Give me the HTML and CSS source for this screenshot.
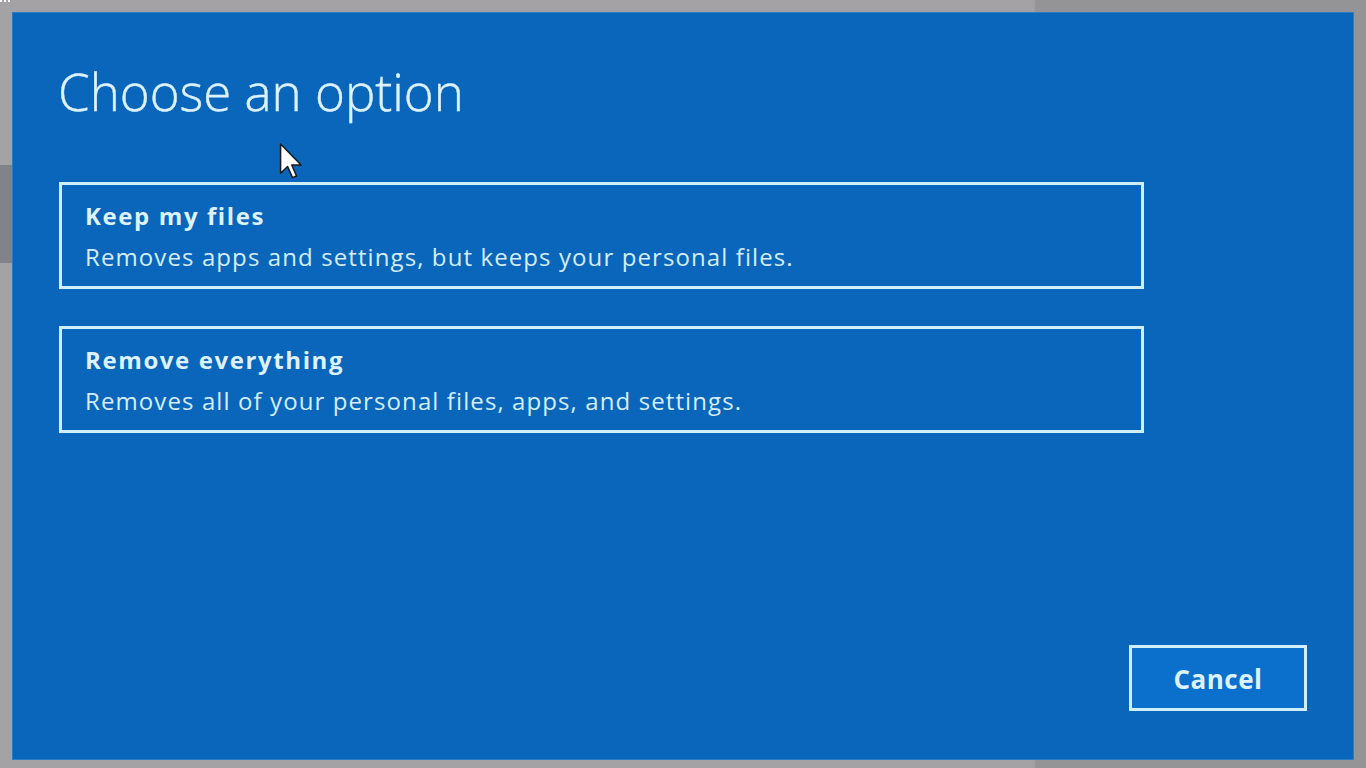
FILE: index.html
```html
<!DOCTYPE html>
<html lang="en">
<head>
<meta charset="utf-8">
<title>Choose an option</title>
<link rel="stylesheet" href="styles.css">
</head>
<body>
<div class="backdrop">
  <div class="patch-left"></div>
  <div class="patch-top"></div>
  <main class="panel">
    <h1 class="title">Choose an option</h1>
    <div class="options">
      <button class="option" type="button">
        <span class="option-name">Keep my files</span>
        <span class="option-desc">Removes apps and settings, but keeps your personal files.</span>
      </button>
      <button class="option" type="button">
        <span class="option-name">Remove everything</span>
        <span class="option-desc">Removes all of your personal files, apps, and settings.</span>
      </button>
    </div>
    <div class="footer">
      <button class="cancel" type="button">Cancel</button>
    </div>
    <svg class="cursor" width="24" height="36" viewBox="0 0 12 19" aria-hidden="true">
      <path d="M0.5 0.5 L0.5 16 L4.2 12.4 L6.8 18.3 L8.9 17.4 L6.4 11.6 L11.3 11.6 Z" fill="#ffffff" stroke="#1a1a1a" stroke-width="0.8" stroke-linejoin="round"/>
    </svg>
  </main>
</div>
</body>
</html>
```
FILE: styles.css
```css
html, body {
  margin: 0;
  padding: 0;
  width: 1366px;
  height: 768px;
  overflow: hidden;
}

body {
  background: #9b9a9c;
  font-family: "Open Sans", "Noto Sans", "Liberation Sans", sans-serif;
}

.backdrop {
  position: relative;
  width: 1366px;
  height: 768px;
  padding: 12px 12px 8px 12px;
  box-sizing: border-box;
  background: linear-gradient(to right, #a4a2a5 0, #a4a2a5 1034px, #949396 1036px, #949396 100%);
}

.patch-left {
  position: absolute;
  left: 0;
  top: 165px;
  width: 12px;
  height: 98px;
  background: #80838a;
}

.patch-top {
  position: absolute;
  left: 0;
  top: 0;
  width: 12px;
  height: 2px;
  background: repeating-linear-gradient(to right, #ffffff 0 2px, transparent 2px 4px);
}

.panel {
  position: relative;
  display: flex;
  flex-direction: column;
  height: 748px;
  background: #0a66ba;
  box-shadow: inset 0 0 0 1px #2a7cc6;
  padding: 0 47px 0 46px;
  box-sizing: border-box;
  color: #dcf2ff;
}

.title {
  margin: 51px 0 0 0;
  font-weight: 300;
  font-size: 51px;
  line-height: 56px;
  letter-spacing: 0;
  color: #dcf2ff;
  -webkit-text-stroke: 0.4px #dcf2ff;
}

.options {
  display: flex;
  flex-direction: column;
  gap: 37px;
  margin-top: 63px;
  width: 1085px;
  padding-left: 1px;
}

.option {
  display: flex;
  flex-direction: column;
  align-items: flex-start;
  height: 107px;
  box-sizing: border-box;
  border: 3px solid #cfefff;
  background: transparent;
  padding: 14px 23px 0 23px;
  margin: 0;
  font-family: inherit;
  color: #dcf2ff;
  text-align: left;
  cursor: default;
}

.option-name {
  font-weight: 700;
  font-size: 24px;
  line-height: 34px;
  letter-spacing: 1.6px;
}

.option-desc {
  font-weight: 400;
  font-size: 24px;
  line-height: 48px;
  letter-spacing: 1.1px;
  color: #d4edfc;
}

.footer {
  margin-top: auto;
  display: flex;
  justify-content: flex-end;
  padding-bottom: 49px;
}

.cancel {
  width: 178px;
  height: 66px;
  box-sizing: border-box;
  border: 3px solid #cfefff;
  background: #0b6fcc;
  color: #dcf2ff;
  font-family: inherit;
  font-weight: 700;
  font-size: 26px;
  letter-spacing: 0.5px;
  margin: 0;
  padding: 2px 0 0 0;
  cursor: default;
}

.cursor {
  position: absolute;
  left: 267px;
  top: 131px;
  overflow: visible;
}
```
